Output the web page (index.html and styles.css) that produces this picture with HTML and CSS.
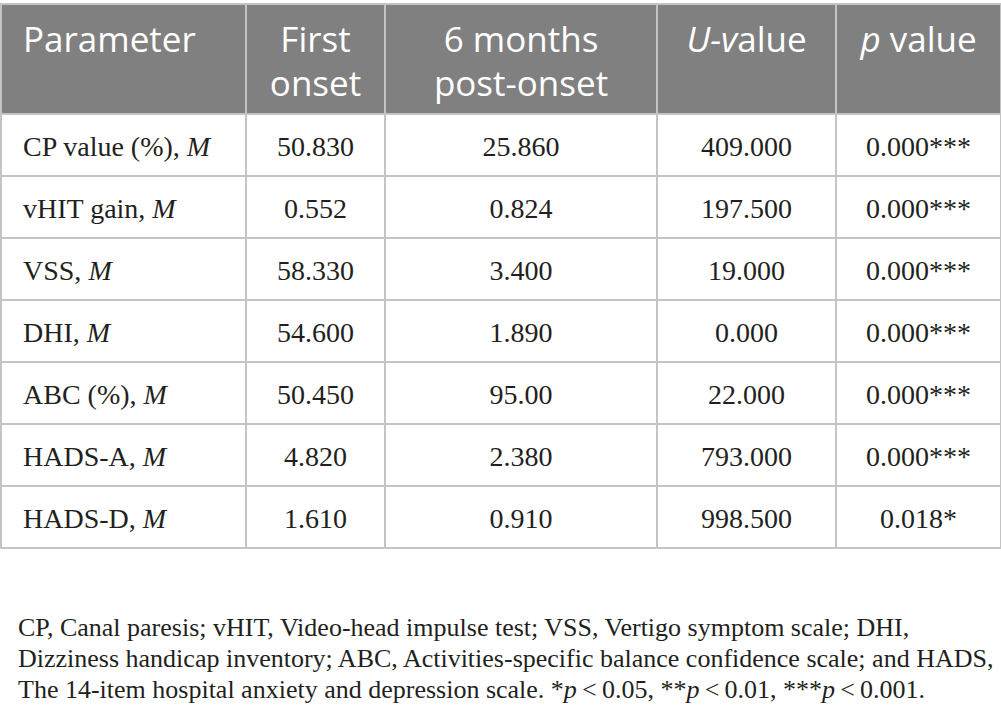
FILE: index.html
```html
<!DOCTYPE html>
<html>
<head>
    <link rel="stylesheet" href="styles.css">
</head>
<body>
    <table class="data_table">
        <colgroup>
            <col class="col_param">
            <col class="col_first">
            <col class="col_six">
            <col class="col_u">
            <col class="col_p">
        </colgroup>
        <tr class="head_row">
            <th class="left">Parameter</th>
            <th>First<br>onset</th>
            <th>6 months<br>post-onset</th>
            <th><i>U-v</i>alue</th>
            <th><i>p</i> value</th>
        </tr>
        <tr><td class="left">CP value (%), <i>M</i></td><td>50.830</td><td>25.860</td><td>409.000</td><td>0.000***</td></tr>
        <tr><td class="left">vHIT gain, <i>M</i></td><td>0.552</td><td>0.824</td><td>197.500</td><td>0.000***</td></tr>
        <tr><td class="left">VSS, <i>M</i></td><td>58.330</td><td>3.400</td><td>19.000</td><td>0.000***</td></tr>
        <tr><td class="left">DHI, <i>M</i></td><td>54.600</td><td>1.890</td><td>0.000</td><td>0.000***</td></tr>
        <tr><td class="left">ABC (%), <i>M</i></td><td>50.450</td><td>95.00</td><td>22.000</td><td>0.000***</td></tr>
        <tr><td class="left">HADS-A, <i>M</i></td><td>4.820</td><td>2.380</td><td>793.000</td><td>0.000***</td></tr>
        <tr><td class="left">HADS-D, <i>M</i></td><td>1.610</td><td>0.910</td><td>998.500</td><td>0.018*</td></tr>
    </table>
    <p class="footnote">
        CP, Canal paresis; vHIT, Video-head impulse test; VSS, Vertigo symptom scale; DHI,<br>
        Dizziness handicap inventory; ABC, Activities-specific balance confidence scale; and HADS,<br>
        The 14-item hospital anxiety and depression scale. *<i>p</i>&thinsp;&lt;&thinsp;0.05, **<i>p</i>&thinsp;&lt;&thinsp;0.01, ***<i>p</i>&thinsp;&lt;&thinsp;0.001.
    </p>
</body>
</html>
```

FILE: styles.css
```css
body { margin: 0; background: #fff; color: #231f20; font-family: "Liberation Serif", "Times New Roman", serif; }

.data_table { width: 1000px; margin-top: 3px; border-collapse: collapse; table-layout: fixed; }
.col_param { width: 245px; }
.col_first { width: 139px; }
.col_six { width: 272px; }
.col_u { width: 179px; }
.col_p { width: 165px; }

th, td { border: 2px solid #c4c4c4; text-align: center; }
th { background-color: #808080; color: #fff; font-family: "Open Sans", "Liberation Sans", sans-serif; font-weight: normal; font-size: 35px; line-height: 44px; padding: 12px 8px 8px; vertical-align: top; }
td { height: 57px; padding: 0 8px; font-size: 28px; line-height: 32px; vertical-align: middle; padding-top: 3px; }
.left { text-align: left; padding-left: 21px; }

.footnote { margin: 63px 0 0 18px; font-size: 26px; line-height: 31px; }
```
